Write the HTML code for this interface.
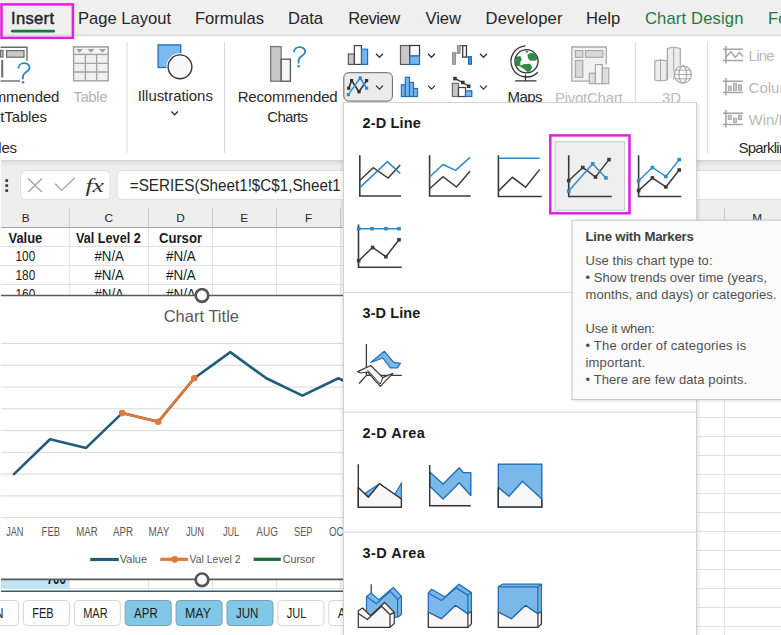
<!DOCTYPE html>
<html><head><meta charset="utf-8"><title>Excel Insert Line Chart</title>
<style>
html,body{margin:0;padding:0;}
body{width:781px;height:635px;overflow:hidden;position:relative;background:#ffffff;font-family:'Liberation Sans', sans-serif;}
svg text{font-family:'Liberation Sans', sans-serif;white-space:pre;}
</style></head><body>
<div class="tabbar" style="position:absolute;left:0px;top:0px;width:781px;height:36px;overflow:hidden;"><svg width="781" height="36" viewBox="0 0 781 36" style="display:block"><rect x="0" y="0" width="781" height="36" fill="#efefef"/><rect x="0" y="34.6" width="781" height="1.4" fill="#dcdcdc"/><text x="11" y="23.7" font-size="16.6" fill="#262626" textLength="43" lengthAdjust="spacing" stroke="#262626" stroke-width="0.45">Insert</text><text x="78" y="23.7" font-size="16.6" fill="#262626" textLength="93" lengthAdjust="spacing">Page Layout</text><text x="195" y="23.7" font-size="16.6" fill="#262626" textLength="69" lengthAdjust="spacing">Formulas</text><text x="288" y="23.7" font-size="16.6" fill="#262626" textLength="35" lengthAdjust="spacing">Data</text><text x="348.3" y="23.7" font-size="16.6" fill="#262626" textLength="52" lengthAdjust="spacing">Review</text><text x="425.5" y="23.7" font-size="16.6" fill="#262626" textLength="35.5" lengthAdjust="spacing">View</text><text x="485.5" y="23.7" font-size="16.6" fill="#262626" textLength="77" lengthAdjust="spacing">Developer</text><text x="586" y="23.7" font-size="16.6" fill="#262626" textLength="34.3" lengthAdjust="spacing">Help</text><text x="645" y="23.7" font-size="16.6" fill="#1d7a45" textLength="98.4" lengthAdjust="spacing">Chart Design</text><text x="768" y="23.7" font-size="16.6" fill="#1d7a45">Fo</text><rect x="11" y="29.8" width="44" height="2.8" rx="1.4" fill="#1a7340"/></svg></div><div class="ribbon" style="position:absolute;left:0px;top:36px;width:781px;height:124px;overflow:hidden;"><svg width="781" height="124" viewBox="0 36 781 124" style="display:block"><rect x="0" y="36" width="781" height="124" fill="#ffffff"/><line x1="127" y1="42" x2="127" y2="153" stroke="#dadada" stroke-width="1"/><line x1="224.5" y1="42" x2="224.5" y2="153" stroke="#dadada" stroke-width="1"/><line x1="635.3" y1="42" x2="635.3" y2="153" stroke="#dadada" stroke-width="1"/><line x1="707.6" y1="42" x2="707.6" y2="153" stroke="#dadada" stroke-width="1"/><path d="M0.5 47.2 H27 V61" fill="none" stroke="#6a6a6a" stroke-width="1.4"/><path d="M0.5 81 H20" fill="none" stroke="#6a6a6a" stroke-width="1.4"/><rect x="0.5" y="50.5" width="2.5" height="6.5" fill="#c9c9c9" stroke="#6a6a6a" stroke-width="1.2"/><path d="M2.2 60 V77.5" stroke="#6a6a6a" stroke-width="2"/><rect x="6.6" y="50.6" width="17.4" height="6.6" fill="#c9c9c9" stroke="#6a6a6a" stroke-width="1.2"/><path d="M18.4 68.4 C18.4 61.7 29.6 61.5 29.6 67.7 C29.6 71.4 23 72.4 23 76 V79.2" fill="none" stroke="#2f88c6" stroke-width="1.8"/><circle cx="23" cy="82.3" r="1.25" fill="#2f88c6"/><text x="-40.6" y="101.5" font-size="15" fill="#2b2b2b" textLength="100" lengthAdjust="spacing">Recommended</text><text x="-28.6" y="121.8" font-size="15" fill="#2b2b2b" textLength="75.7" lengthAdjust="spacing">PivotTables</text><text x="-25.2" y="152.5" font-size="15" fill="#2b2b2b" textLength="42.2" lengthAdjust="spacing">Tables</text><rect x="73.6" y="47" width="34.6" height="33.8" fill="#f0f0f0" stroke="#a3a3a3" stroke-width="1.4"/><rect x="73.6" y="47" width="34.6" height="7.4" fill="#f3f3f3" stroke="#a3a3a3" stroke-width="1.4"/><path d="M76.1 48.9 L82.9 48.9 L79.5 52.8 Z" fill="#a0a0a0"/><path d="M87.6 48.9 L94.4 48.9 L91 52.8 Z" fill="#a0a0a0"/><path d="M99.1 48.9 L105.9 48.9 L102.5 52.8 Z" fill="#a0a0a0"/><line x1="85.4" y1="54.4" x2="85.4" y2="81" stroke="#a3a3a3" stroke-width="1.3"/><line x1="96.6" y1="54.4" x2="96.6" y2="81" stroke="#a3a3a3" stroke-width="1.3"/><line x1="73.6" y1="63.4" x2="108.2" y2="63.4" stroke="#a3a3a3" stroke-width="1.3"/><line x1="73.6" y1="72" x2="108.2" y2="72" stroke="#a3a3a3" stroke-width="1.3"/><text x="73.3" y="101.5" font-size="15" fill="#b3b3b3" textLength="34.2" lengthAdjust="spacing">Table</text><rect x="158.1" y="44.9" width="22.6" height="22.6" fill="#7cb9ec" stroke="#1f6fb8" stroke-width="1.3"/><circle cx="180" cy="66.8" r="13.6" fill="#ffffff"/><circle cx="180" cy="66.8" r="11.9" fill="#f8f8f8" stroke="#333333" stroke-width="1.4"/><text x="137.7" y="100.5" font-size="15" fill="#2b2b2b" textLength="75.2" lengthAdjust="spacing">Illustrations</text><path d="M171.3 111.5 L174.6 114.8 L177.9 111.5" fill="none" stroke="#333" stroke-width="1.3"/><rect x="270.6" y="46.6" width="10.6" height="34.6" fill="#c6c6c6" stroke="#7a7a7a" stroke-width="1.3"/><rect x="281.2" y="59.2" width="9.2" height="22" fill="#f7f7f7" stroke="#555" stroke-width="1.3"/><path d="M293.9 52.3 C293.9 45.6 305.2 45.4 305.2 51.6 C305.2 55.4 298.6 56.4 298.6 60 V63.4" fill="none" stroke="#2f88c6" stroke-width="1.8"/><circle cx="298.6" cy="66.3" r="1.25" fill="#2f88c6"/><text x="237.7" y="102.2" font-size="15" fill="#2b2b2b" textLength="100" lengthAdjust="spacing">Recommended</text><text x="267.3" y="121.8" font-size="15" fill="#2b2b2b" textLength="40.7" lengthAdjust="spacing">Charts</text><rect x="348.4" y="54" width="6" height="10.4" fill="#c8c8c8" stroke="#5a5a5a" stroke-width="1.2"/><rect x="354.4" y="45.6" width="7" height="18.8" fill="#ffffff" stroke="#404040" stroke-width="1.2"/><rect x="361.6" y="49.2" width="6" height="15.2" fill="#74b6ee" stroke="#1f6fb8" stroke-width="1.2"/><path d="M376 53.8 L379.5 57.3 L383 53.8" fill="none" stroke="#333" stroke-width="1.3"/><rect x="400.5" y="45.5" width="9.3" height="19" fill="#c8c8c8" stroke="#5a5a5a" stroke-width="1.2"/><rect x="409.8" y="45.5" width="9.7" height="10.5" fill="#ffffff" stroke="#333" stroke-width="1.2"/><rect x="409.8" y="56" width="9.7" height="8.5" fill="#74b6ee" stroke="#1f6fb8" stroke-width="1.2"/><path d="M428 53.8 L431.5 57.3 L435 53.8" fill="none" stroke="#333" stroke-width="1.3"/><rect x="452.6" y="52.7" width="2.8" height="11.6" fill="#a9a9a9" stroke="#8c8c8c" stroke-width="1"/><rect x="457.4" y="45.6" width="2.7" height="7.7" fill="#a9a9a9" stroke="#8c8c8c" stroke-width="1"/><path d="M455.4 53.3 H457.4" stroke="#8c8c8c" stroke-width="1"/><rect x="462.7" y="45.7" width="3.8" height="11.4" fill="#f4f4f4" stroke="#333" stroke-width="1.2"/><rect x="468.5" y="56.6" width="3" height="7.7" fill="#3d8fd8" stroke="#1f6fb8" stroke-width="1"/><path d="M460.1 45.7 H462.7 M466.5 57.1 H468.5" stroke="#444" stroke-width="1"/><path d="M480 53.8 L483.5 57.3 L487 53.8" fill="none" stroke="#333" stroke-width="1.3"/><rect x="343.8" y="72.7" width="48.6" height="28.4" rx="4.8" fill="#ebebeb" stroke="#646464" stroke-width="1"/><polyline points="348.7,88.2 351.6,80.6 359,91.8 366.6,80.6" fill="none" stroke="#333" stroke-width="1.6"/><rect x="347.09999999999997" y="86.60000000000001" width="3.2" height="3.2" fill="#333"/><rect x="350.0" y="79.0" width="3.2" height="3.2" fill="#333"/><rect x="357.4" y="90.2" width="3.2" height="3.2" fill="#333"/><rect x="365.0" y="79.0" width="3.2" height="3.2" fill="#333"/><polyline points="348.4,94.6 360.2,78 366.6,88.2" fill="none" stroke="#3596d6" stroke-width="1.6"/><rect x="346.79999999999995" y="93.0" width="3.2" height="3.2" fill="#2f8ad0"/><rect x="358.59999999999997" y="76.4" width="3.2" height="3.2" fill="#2f8ad0"/><rect x="365.0" y="86.60000000000001" width="3.2" height="3.2" fill="#2f8ad0"/><path d="M376 85.6 L379.5 89.1 L383 85.6" fill="none" stroke="#333" stroke-width="1.3"/><rect x="401.4" y="84.8" width="3.900000000000034" height="11.700000000000003" fill="#74b6ee" stroke="#1f6fb8" stroke-width="1.2"/><rect x="405.3" y="77.3" width="4.199999999999989" height="19.200000000000003" fill="#74b6ee" stroke="#1f6fb8" stroke-width="1.2"/><rect x="409.5" y="82.4" width="4.0" height="14.099999999999994" fill="#74b6ee" stroke="#1f6fb8" stroke-width="1.2"/><rect x="413.5" y="88.5" width="4.0" height="8.0" fill="#74b6ee" stroke="#1f6fb8" stroke-width="1.2"/><path d="M428 85.6 L431.5 89.1 L435 85.6" fill="none" stroke="#333" stroke-width="1.3"/><rect x="452.4" y="83.3" width="6.1" height="13.2" fill="#c8c8c8" stroke="#6a6a6a" stroke-width="1.2"/><rect x="458.5" y="87.5" width="7" height="9" fill="#fff" stroke="#404040" stroke-width="1.2"/><rect x="465.5" y="90.8" width="6.3" height="5.7" fill="#74b6ee" stroke="#1f6fb8" stroke-width="1.2"/><polyline points="455,78.6 462.8,82.5 468.7,86.3" fill="none" stroke="#333" stroke-width="1.2"/><rect x="453.2" y="76.8" width="3.6" height="3.6" fill="#333"/><rect x="461.0" y="80.7" width="3.6" height="3.6" fill="#333"/><rect x="466.9" y="84.5" width="3.6" height="3.6" fill="#333"/><path d="M480 85.6 L483.5 89.1 L487 85.6" fill="none" stroke="#333" stroke-width="1.3"/><path d="M525.6 45.8 A15.6 15.6 0 1 0 537.8 72.2" fill="none" stroke="#333" stroke-width="1.3"/><circle cx="526.5" cy="61.3" r="11.6" fill="#fafafa" stroke="#333" stroke-width="1.3"/><clipPath id="globe"><circle cx="526.5" cy="61.3" r="11.2"/></clipPath><g clip-path="url(#globe)" fill="#2e8b47"><path d="M513 57 L517.5 56.6 L520.3 56 L521.8 59.4 L520.2 62.2 L520.6 65.5 L518.9 66.3 L513 65 Z"/><path d="M525 50.3 L528.3 51.3 L527 53.6 Z"/><path d="M527.4 54.6 L531.2 52.8 L535 53.8 L538.5 57.5 L536 60.6 L530.2 60.8 L528.2 58.6 Z"/><path d="M519.4 66.3 L523.6 64.2 L530.2 63.8 L532.2 67.4 L530 71.5 L527.4 72 L523.4 68.6 Z"/></g><path d="M525.5 74.5 V80.8 M515.1 80.8 H536.4" fill="none" stroke="#333" stroke-width="1.3"/><text x="507.5" y="101.8" font-size="15" fill="#2b2b2b" textLength="34.9" lengthAdjust="spacing">Maps</text><path d="M589.3 81.1 H571.8 V47 H606.3 V64.5" fill="#f2f2f2" stroke="#a8a8a8" stroke-width="1.3"/><rect x="575.5" y="50.6" width="7.3" height="6.7" fill="#d9d9d9" stroke="#a8a8a8" stroke-width="1.2"/><rect x="585.5" y="50.6" width="17.3" height="6.7" fill="#d9d9d9" stroke="#a8a8a8" stroke-width="1.2"/><rect x="575.5" y="60.5" width="7.3" height="16.8" fill="#d9d9d9" stroke="#a8a8a8" stroke-width="1.2"/><rect x="589.3" y="73.2" width="6.1" height="10.5" fill="#dddddd" stroke="#a8a8a8" stroke-width="1.2"/><rect x="595.4" y="64.6" width="6.9" height="19.1" fill="#f5f5f5" stroke="#a8a8a8" stroke-width="1.2"/><rect x="602.3" y="68" width="6.5" height="15.7" fill="#dddddd" stroke="#a8a8a8" stroke-width="1.2"/><text x="555" y="103.4" font-size="15" fill="#bababa" textLength="67.6" lengthAdjust="spacing">PivotChart</text><path d="M654.8 80 V61 L660.5 59.8 L667 61 V80 L660.5 81 Z" fill="#ececec" stroke="#a8a8a8" stroke-width="1.2"/><line x1="660.5" y1="60" x2="660.5" y2="81" stroke="#a8a8a8" stroke-width="1"/><path d="M667.4 80 V48.5 L673.7 47 L680.3 48.5 V72" fill="#ececec" stroke="#a8a8a8" stroke-width="1.2"/><line x1="673.7" y1="47.3" x2="673.7" y2="80" stroke="#a8a8a8" stroke-width="1"/><circle cx="682.8" cy="74.5" r="9.8" fill="#fbfbfb"/><circle cx="682.8" cy="74.5" r="8.6" fill="none" stroke="#a8a8a8" stroke-width="1.2"/><ellipse cx="682.8" cy="74.5" rx="3.8" ry="8.6" fill="none" stroke="#a8a8a8" stroke-width="1.1"/><path d="M674.2 74.5 H691.4 M675.5 70.3 H690 M675.5 78.7 H690" fill="none" stroke="#a8a8a8" stroke-width="1.1"/><text x="662" y="103.2" font-size="15" fill="#bababa" textLength="19" lengthAdjust="spacing">3D</text><path d="M725.9 46.1 V63.6 M723 49.2 H742.9 M723 60.5 H742.9" fill="none" stroke="#a3a3a3" stroke-width="1.5"/><polyline points="726,57 731,51.8 735.3,57.5 739.6,52.3 742.9,56.5" fill="none" stroke="#a3a3a3" stroke-width="1.3"/><text x="748.6" y="60.8" font-size="15" fill="#b8b8b8" textLength="26" lengthAdjust="spacing">Line</text><path d="M725.9 78.1 V95.6 M723 81.2 H742.9 M723 92.5 H742.9" fill="none" stroke="#a3a3a3" stroke-width="1.5"/><rect x="728.2" y="86.2" width="3" height="4.200000000000003" fill="#cbcbcb" stroke="#a3a3a3" stroke-width="0.9"/><rect x="733.4" y="83.3" width="3" height="7.1000000000000085" fill="#cbcbcb" stroke="#a3a3a3" stroke-width="0.9"/><rect x="738.4" y="84.8" width="3" height="5.6000000000000085" fill="#cbcbcb" stroke="#a3a3a3" stroke-width="0.9"/><text x="748.6" y="92.8" font-size="15" fill="#b8b8b8">Column</text><path d="M725.9 110.1 V127.6 M723 113.2 H742.9 M723 124.5 H742.9" fill="none" stroke="#a3a3a3" stroke-width="1.5"/><rect x="728.2" y="115.3" width="3" height="4.3" fill="#cbcbcb" stroke="#a3a3a3" stroke-width="0.9"/><rect x="733.4" y="118.3" width="3" height="4.3" fill="#cbcbcb" stroke="#a3a3a3" stroke-width="0.9"/><rect x="738.4" y="115.3" width="3" height="4.3" fill="#cbcbcb" stroke="#a3a3a3" stroke-width="0.9"/><text x="748.6" y="124.8" font-size="15" fill="#b8b8b8">Win/Loss</text><text x="738.5" y="152.6" font-size="15" fill="#2b2b2b" textLength="63" lengthAdjust="spacing">Sparklines</text></svg></div><div class="formulabar" style="position:absolute;left:0px;top:160px;width:781px;height:68px;overflow:hidden;"><svg width="781" height="68" viewBox="0 160 781 68" style="display:block"><defs><linearGradient id="rsh" x1="0" y1="0" x2="0" y2="1"><stop offset="0" stop-color="#cfcfcf"/><stop offset="0.25" stop-color="#dedede"/><stop offset="1" stop-color="#eeeeee"/></linearGradient></defs><rect x="0" y="160" width="781" height="68" fill="#ffffff"/><rect x="1" y="160" width="780" height="68" fill="#eeeeee"/><rect x="1" y="160" width="780" height="6" fill="url(#rsh)"/><rect x="5.3" y="179.29999999999998" width="2.8" height="2.6" fill="#3a3a3a"/><rect x="5.3" y="184.29999999999998" width="2.8" height="2.6" fill="#3a3a3a"/><rect x="5.3" y="189.29999999999998" width="2.8" height="2.6" fill="#3a3a3a"/><rect x="20.5" y="170.5" width="89.5" height="29" rx="5" fill="#ffffff" stroke="#dedede"/><path d="M28 178.5 L42 192 M42 178.5 L28 192" stroke="#a3a3a3" stroke-width="1.3" fill="none"/><path d="M55.2 183.8 L61.6 190.4 L74.8 177.8" stroke="#a3a3a3" stroke-width="1.3" fill="none"/><text x="85.5" y="191.6" font-size="19" font-style="italic" fill="#333" style="font-family:'Liberation Serif',serif" textLength="18.5" lengthAdjust="spacingAndGlyphs">fx</text><rect x="117" y="170.5" width="680" height="29" rx="5" fill="#ffffff" stroke="#dedede"/><text x="129.8" y="190.6" font-size="16.5" fill="#262626" textLength="210.8" lengthAdjust="spacingAndGlyphs">=SERIES(Sheet1!$C$1,Sheet1</text><line x1="69.3" y1="208.5" x2="69.3" y2="227.5" stroke="#c6c6c6" stroke-width="1"/><line x1="148.5" y1="208.5" x2="148.5" y2="227.5" stroke="#c6c6c6" stroke-width="1"/><line x1="212.5" y1="208.5" x2="212.5" y2="227.5" stroke="#c6c6c6" stroke-width="1"/><line x1="276.5" y1="208.5" x2="276.5" y2="227.5" stroke="#c6c6c6" stroke-width="1"/><line x1="340.7" y1="208.5" x2="340.7" y2="227.5" stroke="#c6c6c6" stroke-width="1"/><line x1="724.6" y1="208.5" x2="724.6" y2="227.5" stroke="#c6c6c6" stroke-width="1"/><text x="25.8" y="222.2" font-size="11.8" fill="#262626" text-anchor="middle">B</text><text x="108.7" y="222.2" font-size="11.8" fill="#262626" text-anchor="middle">C</text><text x="180.5" y="222.2" font-size="11.8" fill="#262626" text-anchor="middle">D</text><text x="244.2" y="222.2" font-size="11.8" fill="#262626" text-anchor="middle">E</text><text x="308.6" y="222.2" font-size="11.8" fill="#262626" text-anchor="middle">F</text><text x="372.6" y="222.2" font-size="11.8" fill="#262626" text-anchor="middle">G</text><text x="757.1" y="222.2" font-size="11.8" fill="#262626" text-anchor="middle">M</text><line x1="1" y1="227.6" x2="781" y2="227.6" stroke="#a6a6a6" stroke-width="1.2"/></svg></div><div class="grid" style="position:absolute;left:0px;top:228px;width:781px;height:407px;overflow:hidden;"><svg width="781" height="407" viewBox="0 228 781 407" style="display:block"><rect x="0" y="228" width="781" height="407" fill="#ffffff"/><line x1="1" y1="246.5" x2="781" y2="246.5" stroke="#e1e1e1" stroke-width="1"/><line x1="1" y1="265.5" x2="781" y2="265.5" stroke="#e1e1e1" stroke-width="1"/><line x1="1" y1="284.5" x2="781" y2="284.5" stroke="#e1e1e1" stroke-width="1"/><line x1="1" y1="303.5" x2="781" y2="303.5" stroke="#e1e1e1" stroke-width="1"/><line x1="1" y1="322.5" x2="781" y2="322.5" stroke="#e1e1e1" stroke-width="1"/><line x1="1" y1="341.5" x2="781" y2="341.5" stroke="#e1e1e1" stroke-width="1"/><line x1="1" y1="360.5" x2="781" y2="360.5" stroke="#e1e1e1" stroke-width="1"/><line x1="1" y1="379.5" x2="781" y2="379.5" stroke="#e1e1e1" stroke-width="1"/><line x1="1" y1="398.5" x2="781" y2="398.5" stroke="#e1e1e1" stroke-width="1"/><line x1="1" y1="417.5" x2="781" y2="417.5" stroke="#e1e1e1" stroke-width="1"/><line x1="1" y1="436.5" x2="781" y2="436.5" stroke="#e1e1e1" stroke-width="1"/><line x1="1" y1="455.5" x2="781" y2="455.5" stroke="#e1e1e1" stroke-width="1"/><line x1="1" y1="474.5" x2="781" y2="474.5" stroke="#e1e1e1" stroke-width="1"/><line x1="1" y1="493.5" x2="781" y2="493.5" stroke="#e1e1e1" stroke-width="1"/><line x1="1" y1="512.5" x2="781" y2="512.5" stroke="#e1e1e1" stroke-width="1"/><line x1="1" y1="531.5" x2="781" y2="531.5" stroke="#e1e1e1" stroke-width="1"/><line x1="1" y1="550.5" x2="781" y2="550.5" stroke="#e1e1e1" stroke-width="1"/><line x1="1" y1="569.5" x2="781" y2="569.5" stroke="#e1e1e1" stroke-width="1"/><line x1="1" y1="588.5" x2="781" y2="588.5" stroke="#e1e1e1" stroke-width="1"/><line x1="1" y1="607.5" x2="781" y2="607.5" stroke="#e1e1e1" stroke-width="1"/><line x1="1" y1="626.5" x2="781" y2="626.5" stroke="#e1e1e1" stroke-width="1"/><line x1="69.3" y1="228" x2="69.3" y2="635" stroke="#e1e1e1" stroke-width="1"/><line x1="148.5" y1="228" x2="148.5" y2="635" stroke="#e1e1e1" stroke-width="1"/><line x1="212.5" y1="228" x2="212.5" y2="635" stroke="#e1e1e1" stroke-width="1"/><line x1="276.5" y1="228" x2="276.5" y2="635" stroke="#e1e1e1" stroke-width="1"/><line x1="340.7" y1="228" x2="340.7" y2="635" stroke="#e1e1e1" stroke-width="1"/><line x1="724.6" y1="228" x2="724.6" y2="635" stroke="#e1e1e1" stroke-width="1"/><text x="15.5" y="261.4" font-size="14" fill="#1b1b1b" textLength="19.7" lengthAdjust="spacingAndGlyphs">100</text><text x="94.4" y="261.4" font-size="14" fill="#1b1b1b" textLength="29.6" lengthAdjust="spacingAndGlyphs">#N/A</text><text x="166" y="261.4" font-size="14" fill="#1b1b1b" textLength="29.8" lengthAdjust="spacingAndGlyphs">#N/A</text><text x="15.5" y="280.4" font-size="14" fill="#1b1b1b" textLength="19.7" lengthAdjust="spacingAndGlyphs">180</text><text x="94.4" y="280.4" font-size="14" fill="#1b1b1b" textLength="29.6" lengthAdjust="spacingAndGlyphs">#N/A</text><text x="166" y="280.4" font-size="14" fill="#1b1b1b" textLength="29.8" lengthAdjust="spacingAndGlyphs">#N/A</text><text x="15.5" y="299.4" font-size="14" fill="#1b1b1b" textLength="19.7" lengthAdjust="spacingAndGlyphs">160</text><text x="94.4" y="299.4" font-size="14" fill="#1b1b1b" textLength="29.6" lengthAdjust="spacingAndGlyphs">#N/A</text><text x="166" y="299.4" font-size="14" fill="#1b1b1b" textLength="29.8" lengthAdjust="spacingAndGlyphs">#N/A</text><text x="8.5" y="242.5" font-size="14" font-weight="bold" fill="#1b1b1b" textLength="33.8" lengthAdjust="spacingAndGlyphs">Value</text><text x="76" y="242.5" font-size="14" font-weight="bold" fill="#1b1b1b" textLength="64.8" lengthAdjust="spacingAndGlyphs">Val Level 2</text><text x="159" y="242.5" font-size="14" font-weight="bold" fill="#1b1b1b" textLength="43" lengthAdjust="spacingAndGlyphs">Cursor</text><rect x="1" y="570" width="68.3" height="18.5" fill="#c0e4f5"/><text x="46.7" y="584.3" font-size="14" font-weight="bold" fill="#1b1b1b" textLength="19.3" lengthAdjust="spacingAndGlyphs">700</text><rect x="0" y="591" width="344" height="44" fill="#ffffff"/><line x1="1" y1="591.3" x2="344" y2="591.3" stroke="#2e5d70" stroke-width="1.6"/><rect x="-27.50" y="600.5" width="46" height="25" rx="3.5" fill="#ffffff" stroke="#d6d6d6" stroke-width="1"/><text x="-18.6" y="617.6" font-size="14" fill="#1c1c1c" textLength="22" lengthAdjust="spacingAndGlyphs">JAN</text><rect x="23.40" y="600.5" width="46" height="25" rx="3.5" fill="#ffffff" stroke="#d6d6d6" stroke-width="1"/><text x="32.3" y="617.6" font-size="14" fill="#1c1c1c" textLength="21.4" lengthAdjust="spacingAndGlyphs">FEB</text><rect x="74.30" y="600.5" width="46" height="25" rx="3.5" fill="#ffffff" stroke="#d6d6d6" stroke-width="1"/><text x="83.2" y="617.6" font-size="14" fill="#1c1c1c" textLength="24.4" lengthAdjust="spacingAndGlyphs">MAR</text><rect x="125.20" y="600.5" width="46" height="25" rx="3.5" fill="#80c7e8" stroke="#7f9fae" stroke-width="1"/><text x="134.1" y="617.6" font-size="14" fill="#1c1c1c" textLength="23.6" lengthAdjust="spacingAndGlyphs">APR</text><rect x="176.10" y="600.5" width="46" height="25" rx="3.5" fill="#80c7e8" stroke="#7f9fae" stroke-width="1"/><text x="185.0" y="617.6" font-size="14" fill="#1c1c1c" textLength="25.9" lengthAdjust="spacingAndGlyphs">MAY</text><rect x="227.00" y="600.5" width="46" height="25" rx="3.5" fill="#80c7e8" stroke="#7f9fae" stroke-width="1"/><text x="235.9" y="617.6" font-size="14" fill="#1c1c1c" textLength="22.4" lengthAdjust="spacingAndGlyphs">JUN</text><rect x="277.90" y="600.5" width="46" height="25" rx="3.5" fill="#ffffff" stroke="#d6d6d6" stroke-width="1"/><text x="286.8" y="617.6" font-size="14" fill="#1c1c1c" textLength="19.6" lengthAdjust="spacingAndGlyphs">JUL</text><rect x="328.80" y="600.5" width="46" height="25" rx="3.5" fill="#ffffff" stroke="#d6d6d6" stroke-width="1"/><text x="337.7" y="617.6" font-size="14" fill="#1c1c1c" textLength="26" lengthAdjust="spacingAndGlyphs">AUG</text></svg></div><div class="chart" style="position:absolute;left:0px;top:288px;width:344px;height:300px;overflow:hidden;"><svg width="344" height="300" viewBox="0 288 344 300" style="display:block"><rect x="1" y="295.5" width="343" height="284" fill="#ffffff"/><line x1="1" y1="343.50" x2="344" y2="343.50" stroke="#d9d9d9" stroke-width="1"/><line x1="1" y1="365.27" x2="344" y2="365.27" stroke="#d9d9d9" stroke-width="1"/><line x1="1" y1="387.04" x2="344" y2="387.04" stroke="#d9d9d9" stroke-width="1"/><line x1="1" y1="408.81" x2="344" y2="408.81" stroke="#d9d9d9" stroke-width="1"/><line x1="1" y1="430.58" x2="344" y2="430.58" stroke="#d9d9d9" stroke-width="1"/><line x1="1" y1="452.35" x2="344" y2="452.35" stroke="#d9d9d9" stroke-width="1"/><line x1="1" y1="474.12" x2="344" y2="474.12" stroke="#d9d9d9" stroke-width="1"/><line x1="1" y1="495.89" x2="344" y2="495.89" stroke="#d9d9d9" stroke-width="1"/><line x1="1" y1="517.66" x2="344" y2="517.66" stroke="#d9d9d9" stroke-width="1"/><line x1="1" y1="295.5" x2="344" y2="295.5" stroke="#5a5a5a" stroke-width="1.6"/><line x1="1" y1="579.4" x2="344" y2="579.4" stroke="#5a5a5a" stroke-width="1.6"/><text x="163.7" y="322" font-size="16.5" fill="#595959" textLength="75.3" lengthAdjust="spacing">Chart Title</text><polyline points="14.00,474.06 50.05,439.23 86.10,447.94 122.15,413.10 158.20,421.81 194.25,378.27 230.30,352.15 266.35,378.27 302.40,395.69 338.45,378.27 374.50,395.69" fill="none" stroke="#215d7b" stroke-width="2.6" stroke-linejoin="round" stroke-linecap="round"/><polyline points="122.15,413.10 158.20,421.81 194.25,378.27" fill="none" stroke="#e0783a" stroke-width="2.6" stroke-linejoin="round"/><circle cx="122.15" cy="413.10" r="3.3" fill="#e0783a"/><circle cx="158.20" cy="421.81" r="3.3" fill="#e0783a"/><circle cx="194.25" cy="378.27" r="3.3" fill="#e0783a"/><text x="6.2" y="536.2" font-size="12" fill="#595959" textLength="17.2" lengthAdjust="spacingAndGlyphs">JAN</text><text x="41.6" y="536.2" font-size="12" fill="#595959" textLength="18.5" lengthAdjust="spacingAndGlyphs">FEB</text><text x="76.15" y="536.2" font-size="12" fill="#595959" textLength="21.5" lengthAdjust="spacingAndGlyphs">MAR</text><text x="112.95" y="536.2" font-size="12" fill="#595959" textLength="20" lengthAdjust="spacingAndGlyphs">APR</text><text x="148.6" y="536.2" font-size="12" fill="#595959" textLength="20.8" lengthAdjust="spacingAndGlyphs">MAY</text><text x="185.95" y="536.2" font-size="12" fill="#595959" textLength="18.2" lengthAdjust="spacingAndGlyphs">JUN</text><text x="223.05" y="536.2" font-size="12" fill="#595959" textLength="16.1" lengthAdjust="spacingAndGlyphs">JUL</text><text x="256.3" y="536.2" font-size="12" fill="#595959" textLength="21.7" lengthAdjust="spacingAndGlyphs">AUG</text><text x="294.1" y="536.2" font-size="12" fill="#595959" textLength="18.2" lengthAdjust="spacingAndGlyphs">SEP</text><text x="329.0" y="536.2" font-size="12" fill="#595959" textLength="20.5" lengthAdjust="spacingAndGlyphs">OCT</text><line x1="90.2" y1="559.5" x2="118.8" y2="559.5" stroke="#215d7b" stroke-width="3.2"/><text x="119.8" y="563.4" font-size="11.8" fill="#595959" textLength="27.2" lengthAdjust="spacingAndGlyphs">Value</text><line x1="160.2" y1="559.3" x2="188" y2="559.3" stroke="#e0783a" stroke-width="3.2"/><circle cx="174.7" cy="559.3" r="3.4" fill="#e0783a"/><text x="189.6" y="563.4" font-size="11.8" fill="#595959" textLength="50.9" lengthAdjust="spacingAndGlyphs">Val Level 2</text><line x1="253.6" y1="559.3" x2="280.8" y2="559.3" stroke="#1e6b30" stroke-width="3.2"/><text x="282.7" y="563.4" font-size="11.8" fill="#595959" textLength="32.3" lengthAdjust="spacingAndGlyphs">Cursor</text><circle cx="202" cy="295.5" r="6.3" fill="#ffffff" stroke="#555555" stroke-width="2.7"/><circle cx="202" cy="579.8" r="6.3" fill="#ffffff" stroke="#555555" stroke-width="2.7"/></svg></div><div class="panel" style="position:absolute;left:340px;top:100px;width:365px;height:535px;overflow:hidden;"><svg width="365" height="535" viewBox="340 100 365 535" style="display:block"><defs><linearGradient id="psh" x1="0" y1="0" x2="1" y2="0"><stop offset="0" stop-color="#000" stop-opacity="0.10"/><stop offset="1" stop-color="#000" stop-opacity="0"/></linearGradient><linearGradient id="psh2" x1="1" y1="0" x2="0" y2="0"><stop offset="0" stop-color="#000" stop-opacity="0.09"/><stop offset="1" stop-color="#000" stop-opacity="0"/></linearGradient></defs><rect x="696.5" y="104" width="4.5" height="540" fill="url(#psh)"/><rect x="339" y="104" width="4.5" height="540" fill="url(#psh2)"/><rect x="343.5" y="102.5" width="353" height="540" fill="#ffffff" stroke="#d2d2d2" stroke-width="1"/><text x="362.5" y="127.8" font-size="14.5" font-weight="bold" fill="#1a1a1a" textLength="58.3" lengthAdjust="spacing">2-D Line</text><text x="362.5" y="318" font-size="14.5" font-weight="bold" fill="#1a1a1a" textLength="57.8" lengthAdjust="spacing">3-D Line</text><text x="362.5" y="437.6" font-size="14.5" font-weight="bold" fill="#1a1a1a" textLength="62.4" lengthAdjust="spacing">2-D Area</text><text x="362.5" y="557.6" font-size="14.5" font-weight="bold" fill="#1a1a1a" textLength="62.4" lengthAdjust="spacing">3-D Area</text><line x1="344" y1="292.3" x2="696" y2="292.3" stroke="#d6d6d6" stroke-width="1"/><line x1="344" y1="412.2" x2="696" y2="412.2" stroke="#d6d6d6" stroke-width="1"/><line x1="344" y1="532.2" x2="696" y2="532.2" stroke="#d6d6d6" stroke-width="1"/><rect x="555" y="141.7" width="69.6" height="68.7" fill="#efefef" stroke="#c8c8c8" stroke-width="1"/><rect x="550.3" y="135.4" width="79.2" height="77.9" fill="none" stroke="#e21ee2" stroke-width="2.5"/><path d="M359.8 155.3 V196 H401" fill="none" stroke="#3a3a3a" stroke-width="1.6"/><polyline points="359.8,180.5 373.2,167.7 388.1,178 400.2,164.9" fill="none" stroke="#3c3c3c" stroke-width="1.5" stroke-linejoin="miter"/><polyline points="359.8,187.6 387.4,161.6 400.2,173.4" fill="none" stroke="#2e8bc9" stroke-width="1.5" stroke-linejoin="miter"/><path d="M429.6 155.3 V196 H470.8" fill="none" stroke="#3a3a3a" stroke-width="1.6"/><polyline points="429.6,177 443,164.5 455.6,170.4 470,157.4" fill="none" stroke="#2e8bc9" stroke-width="1.5" stroke-linejoin="miter"/><polyline points="429.6,188.7 443,176.7 456.5,187 470,171.3" fill="none" stroke="#3c3c3c" stroke-width="1.5" stroke-linejoin="miter"/><path d="M498.4 155.3 V196.5 H541.8" fill="none" stroke="#3a3a3a" stroke-width="1.6"/><polyline points="498.4,158.3 539.7,158.3" fill="none" stroke="#2e8bc9" stroke-width="1.5" stroke-linejoin="miter"/><polyline points="498.4,191.1 512.4,177.3 525.6,187.2 539.7,169.4" fill="none" stroke="#3c3c3c" stroke-width="1.5" stroke-linejoin="miter"/><path d="M568.7 155.3 V196.5 H611.8" fill="none" stroke="#3a3a3a" stroke-width="1.6"/><polyline points="568.7,180.7 582.8,167.5 595.5,177 609,159.6" fill="none" stroke="#3c3c3c" stroke-width="1.5" stroke-linejoin="miter"/><rect x="566.90" y="178.90" width="3.6" height="3.6" fill="#3c3c3c"/><rect x="581.00" y="165.70" width="3.6" height="3.6" fill="#3c3c3c"/><rect x="593.70" y="175.20" width="3.6" height="3.6" fill="#3c3c3c"/><rect x="607.20" y="157.80" width="3.6" height="3.6" fill="#3c3c3c"/><polyline points="568.7,191.1 592.7,163.8 605.9,177.9" fill="none" stroke="#2e8bc9" stroke-width="1.5" stroke-linejoin="miter"/><rect x="566.90" y="189.30" width="3.6" height="3.6" fill="#2e8bc9"/><rect x="590.90" y="162.00" width="3.6" height="3.6" fill="#2e8bc9"/><rect x="604.10" y="176.10" width="3.6" height="3.6" fill="#2e8bc9"/><path d="M638.6 155.3 V196.5 H681.4" fill="none" stroke="#3a3a3a" stroke-width="1.6"/><polyline points="638.6,180.7 652.4,167.5 665.9,176.5 679.2,159.6" fill="none" stroke="#2e8bc9" stroke-width="1.5" stroke-linejoin="miter"/><rect x="636.80" y="178.90" width="3.6" height="3.6" fill="#2e8bc9"/><rect x="650.60" y="165.70" width="3.6" height="3.6" fill="#2e8bc9"/><rect x="664.10" y="174.70" width="3.6" height="3.6" fill="#2e8bc9"/><rect x="677.40" y="157.80" width="3.6" height="3.6" fill="#2e8bc9"/><polyline points="638.6,190.6 652.4,177.9 665.9,186.9 679.2,170" fill="none" stroke="#3c3c3c" stroke-width="1.5" stroke-linejoin="miter"/><rect x="636.80" y="188.80" width="3.6" height="3.6" fill="#3c3c3c"/><rect x="650.60" y="176.10" width="3.6" height="3.6" fill="#3c3c3c"/><rect x="664.10" y="185.10" width="3.6" height="3.6" fill="#3c3c3c"/><rect x="677.40" y="168.20" width="3.6" height="3.6" fill="#3c3c3c"/><path d="M358.5 224.5 V267.3 H401.7" fill="none" stroke="#3a3a3a" stroke-width="1.6"/><polyline points="358.7,228.7 372,228.7 385.9,228.7 399,228.7" fill="none" stroke="#2e8bc9" stroke-width="1.5" stroke-linejoin="miter"/><rect x="356.90" y="226.90" width="3.6" height="3.6" fill="#2e8bc9"/><rect x="370.20" y="226.90" width="3.6" height="3.6" fill="#2e8bc9"/><rect x="384.10" y="226.90" width="3.6" height="3.6" fill="#2e8bc9"/><rect x="397.20" y="226.90" width="3.6" height="3.6" fill="#2e8bc9"/><polyline points="358.7,260.7 372.6,247.5 385.9,256.7 399,239.8" fill="none" stroke="#3c3c3c" stroke-width="1.5" stroke-linejoin="miter"/><rect x="356.90" y="258.90" width="3.6" height="3.6" fill="#3c3c3c"/><rect x="370.80" y="245.70" width="3.6" height="3.6" fill="#3c3c3c"/><rect x="384.10" y="254.90" width="3.6" height="3.6" fill="#3c3c3c"/><rect x="397.20" y="238.00" width="3.6" height="3.6" fill="#3c3c3c"/><path d="M366.4 344.1 V375.4 H401.7 M366.4 375.4 L359.1 383.5" fill="none" stroke="#3a3a3a" stroke-width="1.3"/><path d="M370.8 362.5 L384.3 351.2 L393.5 362.1 L400.4 363.4 L397.3 367.8 L390.3 367.8 L382.8 358 Z" fill="#7ab8ea" stroke="#1f6fb8" stroke-width="1.2" stroke-linejoin="round"/><path d="M357.6 371.6 L370.8 365.5 L382.8 377.6 L393 373.3 L380.3 386.4 L367.7 372 L360.5 373 Z" fill="#f7f7f7" stroke="#3a3a3a" stroke-width="1.2" stroke-linejoin="round"/><path d="M367.7 370.3 L380.3 384 L382.8 377.6" fill="none" stroke="#3a3a3a" stroke-width="1"/><path d="M365.2 493.3 L379.5 483.6 L368.3 497.2 Z" fill="#7ab8ea" stroke="#1f6fb8" stroke-width="1.1"/><path d="M394.8 494.2 L401.4 483.1 L401.4 499 Z" fill="#7ab8ea" stroke="#1f6fb8" stroke-width="1.1"/><path d="M358.3 487.5 L368.3 497.2 L379.5 483.6 L401.4 499 V507.2 H358.3 Z" fill="#f7f7f7" stroke="#333" stroke-width="1.4" stroke-linejoin="round"/><path d="M358.3 464.2 V507.2" stroke="#333" stroke-width="1.4"/><path d="M429.7 486 L443.1 499 L459.3 482.8 L470.8 495.5 V505.7 H429.7 Z" fill="#f7f7f7"/><path d="M429.7 472 L443.1 483.9 L459.3 467.8 L463.3 472.6 L470.8 472.6 V495.5 L459.3 482.8 L443.1 499 L429.7 486 Z" fill="#7ab8ea" stroke="#1f6fb8" stroke-width="1.4" stroke-linejoin="round"/><path d="M429.7 465 V505.7 H470.8" fill="none" stroke="#333" stroke-width="1.4"/><rect x="498.3" y="464.2" width="43.5" height="42.8" fill="#7ab8ea" stroke="#1f6fb8" stroke-width="1.4"/><path d="M498.3 487.4 L509 496.3 L522.5 481.2 L541.8 499 V507 H498.3 Z" fill="#f7f7f7"/><path d="M498.3 487.4 L509 496.3 L522.5 481.2 L541.8 499" fill="none" stroke="#1f6fb8" stroke-width="1.4"/><path d="M498.3 487.4 V507 H541.8 V499" fill="none" stroke="#333" stroke-width="1.4"/><path d="M371.2 584.2 V593.4" stroke="#333" stroke-width="1.2"/><path d="M366.5 596.5 L371 593 L378.8 599.6 L393.3 587.5 L401.4 596.2 V614.6 L397.6 617.2 H366.5 Z" fill="#7ab8ea" stroke="#1f6fb8" stroke-width="1.2" stroke-linejoin="round"/><path d="M366.5 596.5 L376.3 603.8 L390.2 591.2 L397.6 599.5 V617.2 M397.6 599.5 L401.4 596.2" fill="none" stroke="#1f6fb8" stroke-width="1.2"/><path d="M358.3 610.8 L362.6 608 L370.5 615.7 L384.6 602.5 L394.3 612.4 V623.5 L390 627.4 H358.3 Z" fill="#f8f8f8" stroke="#333" stroke-width="1.2" stroke-linejoin="round"/><path d="M358.3 613.5 L367.4 619.4 L381.5 606.2 L390 614.6 V627.4 M390 614.6 L394.3 612.4" fill="none" stroke="#333" stroke-width="1.2"/><path d="M428.3 612 L441.4 618.6 L455.5 605.3 L467.9 613.7 L471.4 611 V623.9 L467.9 627.4 H428.3 Z" fill="#f8f8f8" stroke="#333" stroke-width="1.3" stroke-linejoin="round"/><path d="M428.3 593 L431.7 589.3 L444.9 597 L459 584.2 L471.4 592.6 V611 L467.9 613.7 L455.5 605.3 L441.4 618.6 L428.3 612 Z" fill="#7ab8ea" stroke="#1f6fb8" stroke-width="1.3" stroke-linejoin="round"/><path d="M428.3 593 L441.4 600.5 L456 587.9 L467.9 595.2 V613.7 M467.9 595.2 L471.4 592.6" fill="none" stroke="#1f6fb8" stroke-width="1.3"/><path d="M467.9 613.7 V627.4" stroke="#333" stroke-width="1.2"/><path d="M498.3 612 L511.4 618.6 L525.5 605.3 L537.9 613.7 L541.4 611 V623.9 L537.9 627.4 H498.3 Z" fill="#f8f8f8" stroke="#333" stroke-width="1.3" stroke-linejoin="round"/><path d="M498.3 586.8 L502.6 584.2 H541.4 V611 L537.9 613.7 L525.5 605.3 L511.4 618.6 L498.3 612 Z" fill="#7ab8ea" stroke="#1f6fb8" stroke-width="1.3" stroke-linejoin="round"/><path d="M498.3 586.8 H537.9 V613.7 M537.9 586.8 L541.4 584.2" fill="none" stroke="#1f6fb8" stroke-width="1.3"/><path d="M537.9 613.7 V627.4" stroke="#333" stroke-width="1.2"/></svg></div><div class="tooltip" style="position:absolute;left:566px;top:214px;width:215px;height:192px;overflow:hidden;"><svg width="215" height="192" viewBox="566 214 215 192" style="display:block"><defs><filter id="tsh" x="-10%" y="-10%" width="130%" height="130%"><feDropShadow dx="1" dy="1" stdDeviation="1.2" flood-opacity="0.12"/></filter></defs><rect x="572" y="220.2" width="230" height="179.4" fill="#fbfbfb" stroke="#c3c3c3" stroke-width="1" filter="url(#tsh)"/><text x="585.5" y="240.5" font-size="13.2" font-weight="bold" fill="#404040" textLength="108.4" lengthAdjust="spacing">Line with Markers</text><text x="585.5" y="264.6" font-size="13" fill="#505050" textLength="127" lengthAdjust="spacing">Use this chart type to:</text><text x="585.5" y="281.6" font-size="13" fill="#505050" textLength="181.5" lengthAdjust="spacing">• Show trends over time (years,</text><text x="585.5" y="298.6" font-size="13" fill="#505050" textLength="191" lengthAdjust="spacing">months, and days) or categories.</text><text x="585.5" y="332.6" font-size="13" fill="#505050" textLength="69.3" lengthAdjust="spacing">Use it when:</text><text x="585.5" y="349.6" font-size="13" fill="#505050" textLength="160.7" lengthAdjust="spacing">• The order of categories is</text><text x="585.5" y="366.6" font-size="13" fill="#505050" textLength="59.6" lengthAdjust="spacing">important.</text><text x="585.5" y="383.6" font-size="13" fill="#505050" textLength="161.7" lengthAdjust="spacing">• There are few data points.</text></svg></div><div class="highlight" style="position:absolute;left:0px;top:0px;width:80px;height:42px;overflow:hidden;"><svg width="80" height="42" viewBox="0 0 80 42" style="display:block"><rect x="1.5" y="4.4" width="71.4" height="33.4" fill="none" stroke="#e21ee2" stroke-width="2.5"/></svg></div>
</body></html>
